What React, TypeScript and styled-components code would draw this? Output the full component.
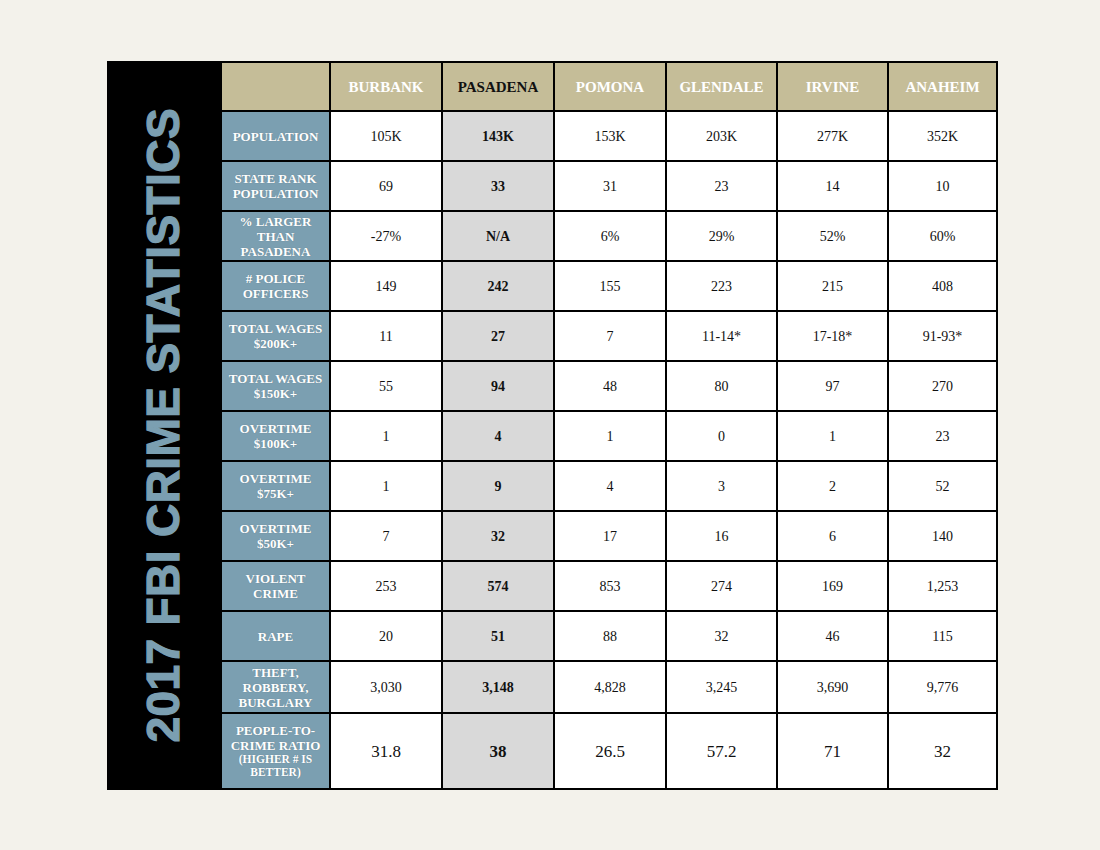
import React from "react";
import styled, { createGlobalStyle } from "styled-components";

const Global = createGlobalStyle`
  html, body { margin: 0; padding: 0; background: #f3f2eb; }
  body { font-family: "Liberation Serif", serif; }
`;

const Page = styled.div`
  padding: 61px 0 0 107px;
  min-height: 850px;
  box-sizing: border-box;
`;

const Grid = styled.div`
  display: grid;
  grid-template-columns: 111px 107px 110px 110px 110px 109px 109px 107px;
  grid-template-rows: 47px repeat(11, 48px) 50px 74px;
  gap: 2px;
  padding: 2px;
  background: #000;
  width: max-content;
`;

const TitleCol = styled.div`
  grid-row: 1 / -1;
  grid-column: 1;
  background: #000;
  display: flex;
  align-items: center;
  justify-content: center;
  padding: 0 4px 0 0;
`;

const Title = styled.div`
  writing-mode: vertical-rl;
  transform: rotate(180deg);
  font-family: "Liberation Sans", Arial, sans-serif;
  font-weight: 700;
  font-size: 46px;
  line-height: 1;
  color: #7b9fb1;
  -webkit-text-stroke: 1.3px #7b9fb1;
  white-space: nowrap;
  letter-spacing: 0.4px;
`;

const Cell = styled.div`
  display: flex;
  align-items: center;
  justify-content: center;
  text-align: center;
`;

const HeadCell = styled(Cell)<{ $dark?: boolean }>`
  background: #c5bd98;
  color: ${(p) => (p.$dark ? "#111" : "#fff")};
  font-weight: 700;
  font-size: 15px;
  padding-top: 1px;
`;

const LabelCell = styled(Cell)`
  background: #7b9fb1;
  color: #fff;
  font-weight: 700;
  font-size: 13px;
  line-height: 15px;
  flex-direction: column;
  padding: 0 4px;
  text-shadow: 0 0 1px rgba(0, 0, 0, 0.25);
`;

const Small = styled.span`
  font-size: 11.5px;
  line-height: 13px;
`;

const DataCell = styled(Cell)<{ $hl?: boolean; $big?: boolean }>`
  background: ${(p) => (p.$hl ? "#d9d9d9" : "#fff")};
  color: #111;
  font-weight: ${(p) => (p.$hl ? 700 : 400)};
  font-size: ${(p) => (p.$big ? "17px" : "14px")};
  padding-top: 1px;
`;

const cities = ["BURBANK", "PASADENA", "POMONA", "GLENDALE", "IRVINE", "ANAHEIM"];

type Row = { label: React.ReactNode; values: string[]; big?: boolean };

const rows: Row[] = [
  { label: "POPULATION", values: ["105K", "143K", "153K", "203K", "277K", "352K"] },
  { label: <>STATE RANK<br />POPULATION</>, values: ["69", "33", "31", "23", "14", "10"] },
  { label: <>% LARGER<br />THAN<br />PASADENA</>, values: ["-27%", "N/A", "6%", "29%", "52%", "60%"] },
  { label: <># POLICE<br />OFFICERS</>, values: ["149", "242", "155", "223", "215", "408"] },
  { label: <>TOTAL WAGES<br />$200K+</>, values: ["11", "27", "7", "11-14*", "17-18*", "91-93*"] },
  { label: <>TOTAL WAGES<br />$150K+</>, values: ["55", "94", "48", "80", "97", "270"] },
  { label: <>OVERTIME<br />$100K+</>, values: ["1", "4", "1", "0", "1", "23"] },
  { label: <>OVERTIME<br />$75K+</>, values: ["1", "9", "4", "3", "2", "52"] },
  { label: <>OVERTIME<br />$50K+</>, values: ["7", "32", "17", "16", "6", "140"] },
  { label: <>VIOLENT<br />CRIME</>, values: ["253", "574", "853", "274", "169", "1,253"] },
  { label: "RAPE", values: ["20", "51", "88", "32", "46", "115"] },
  { label: <>THEFT,<br />ROBBERY,<br />BURGLARY</>, values: ["3,030", "3,148", "4,828", "3,245", "3,690", "9,776"] },
  {
    label: (
      <>
        PEOPLE-TO-<br />CRIME RATIO<br />
        <Small>(HIGHER # IS<br />BETTER)</Small>
      </>
    ),
    values: ["31.8", "38", "26.5", "57.2", "71", "32"],
    big: true,
  },
];

export default function App() {
  return (
    <>
      <Global />
      <Page>
        <Grid>
          <TitleCol>
            <Title>2017 FBI CRIME STATISTICS</Title>
          </TitleCol>
          <HeadCell />
          {cities.map((c, i) => (
            <HeadCell key={c} $dark={i === 1}>
              {c}
            </HeadCell>
          ))}
          {rows.map((r, ri) => (
            <React.Fragment key={ri}>
              <LabelCell>{r.label}</LabelCell>
              {r.values.map((v, vi) => (
                <DataCell key={vi} $hl={vi === 1} $big={r.big}>
                  {v}
                </DataCell>
              ))}
            </React.Fragment>
          ))}
        </Grid>
      </Page>
    </>
  );
}
